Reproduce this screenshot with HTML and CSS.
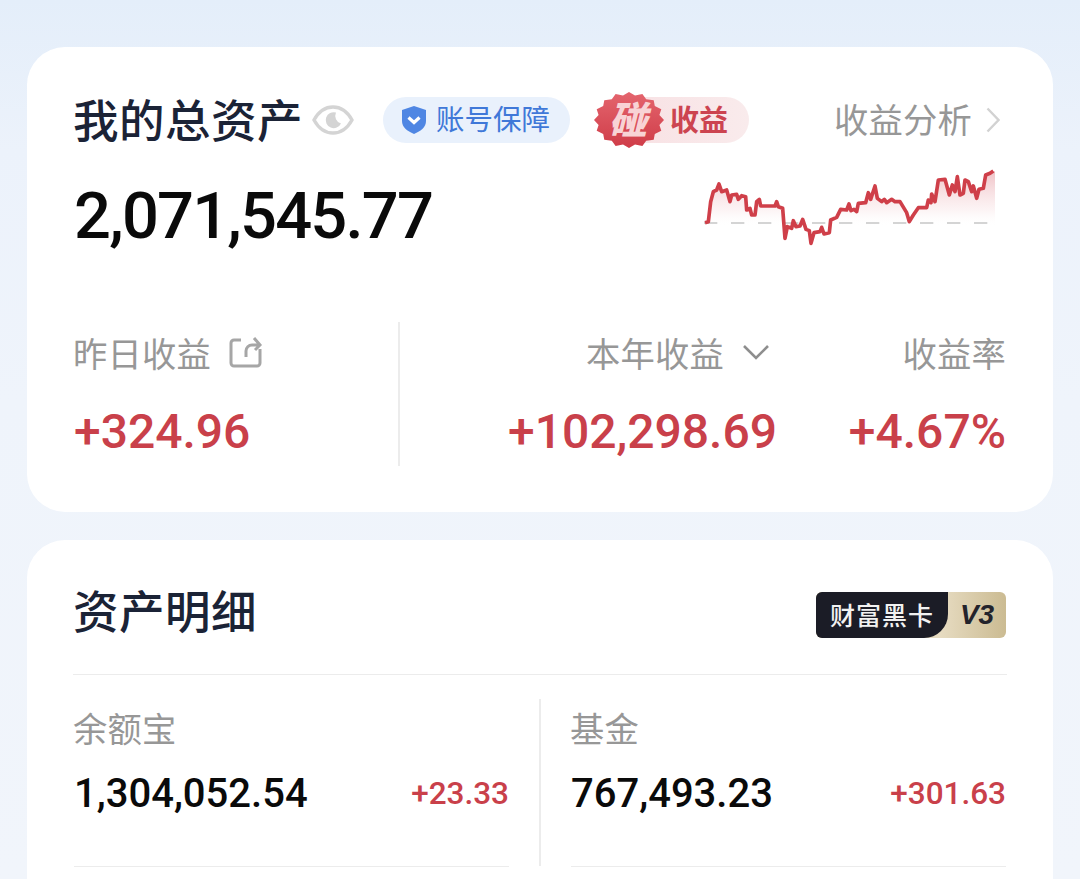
FILE: index.html
```html
<!DOCTYPE html>
<html lang="zh">
<head>
<meta charset="utf-8">
<title>我的总资产</title>
<link rel="stylesheet" href="styles.css">
</head>
<body>
<main class="page">
  <section class="card summary">
    <div class="head">
      <h1 class="title">我的总资产</h1>
      <svg class="eye" viewBox="0 0 42 32"><path d="M2 16C7 7 13 3 21 3s14 4 19 13c-5 9-11 13-19 13S7 25 2 16z" fill="none" stroke="#d4d4d4" stroke-width="3.400"/><path d="M24 8.500a8 8 0 1 0 5 11 8 8 0 0 1-5-11z" fill="#d4d4d4"/></svg>
      <div class="guard">
        <svg class="shield" viewBox="0 0 26 30"><path d="M13 1l12 4v11c0 6-5 10-12 13C6 26 1 22 1 16V5z" fill="#4f86e3"/><path d="M7.500 12.500l5.500 5 5.500-5" fill="none" stroke="#fff" stroke-width="3.200"/></svg>
        <span class="guard-text">账号保障</span>
      </div>
      <div class="promo">
        <div class="burst">
          <svg class="burst-bg" viewBox="0 0 72 56"><defs><linearGradient id="bg" x1="0" y1="0" x2="0" y2="1"><stop offset="0" stop-color="#e4656e"/><stop offset="1" stop-color="#cf3c48"/></linearGradient></defs><polygon fill="url(#bg)" points="71,28 66.400,32.900 68.300,38.700 61.800,41.900 60.700,47.800 53.200,48.800 49.400,53.900 42,52.500 36,56 30,52.500 22.600,53.900 18.800,48.800 11.300,47.800 10.200,41.900 3.700,38.700 5.600,32.900 1,28 5.600,23.100 3.700,17.300 10.200,14.100 11.300,8.200 18.800,7.200 22.600,2.100 30,3.500 36,0 42,3.500 49.400,2.100 53.200,7.200 60.700,8.200 61.800,14.100 68.300,17.300 66.400,23.100"/></svg>
          <span class="burst-text">碰</span>
        </div>
        <span class="promo-text">收益</span>
      </div>
      <div class="link">
        <span class="link-text">收益分析</span>
        <svg class="link-arrow" viewBox="0 0 14 26"><path d="M1.500 1.500L12.500 13 1.500 24.500" fill="none" stroke="#d2d2d2" stroke-width="2.400"/></svg>
      </div>
    </div>
    <div class="total-row">
      <div class="total">2,071,545.77</div>
      <svg class="spark" viewBox="0 0 900 270">
        <defs><linearGradient id="area" x1="0" y1="0" x2="0" y2="1"><stop offset="0" stop-color="#e38f97" stop-opacity=".55"/><stop offset=".7" stop-color="#f7dfe1" stop-opacity=".35"/><stop offset="1" stop-color="#fff" stop-opacity="0"/></linearGradient></defs>
        <path fill="url(#area)" d="M15 200L15 188 25 185 32 125 40 95 50 90 57 72 65 95 80 90 90 125 95 105 110 103 115 118 125 107 137 110 140 150 150 145 155 165 165 165 170 125 178 118 182 138 225 138 230 125 235 140 248 145 253 200 392 200 392 180 410 172 422 148 440 150 447 132 453 152 462 148 470 155 475 130 497 128 505 98 512 118 525 78 532 115 545 125 553 118 560 128 575 118 585 125 600 125 620 158 628 185 640 165 655 143 680 143 685 120 693 128 695 102 705 125 715 60 735 58 748 105 757 75 765 95 772 50 780 105 790 100 795 60 805 65 815 95 820 78 830 115 837 88 850 85 857 45 870 40 885 33 885 200z"/>
        <path d="M12 189H885" fill="none" stroke="#d4d4d4" stroke-width="6" stroke-dasharray="40 41"/>
        <path fill="none" stroke="#cf3f49" stroke-width="11" stroke-linejoin="round" d="M15 188L25 185 32 125 40 95 50 90 57 72 65 95 80 90 90 125 95 105 110 103 115 118 125 107 137 110 140 150 150 145 155 165 165 165 170 125 178 118 182 138 225 138 230 125 235 140 248 145 255 235 262 200 275 205 280 182 288 200 300 198 308 178 318 208 328 212 333 250 342 218 360 215 365 202 372 222 388 218 392 180 410 172 422 148 440 150 447 132 453 152 462 148 470 155 475 130 497 128 505 98 512 118 525 78 532 115 545 125 553 118 560 128 575 118 585 125 600 125 620 158 628 185 640 165 655 143 680 143 685 120 693 128 695 102 705 125 715 60 735 58 748 105 757 75 765 95 772 50 780 105 790 100 795 60 805 65 815 95 820 78 830 115 837 88 850 85 857 45 870 40 880 33"/>
      </svg>
    </div>
    <div class="stats">
      <div class="stat stat-day">
        <div class="label">昨日收益
          <svg class="share" viewBox="0 0 34 32"><path d="M12 4H5a3 3 0 0 0-3 3v20a3 3 0 0 0 3 3h23a3 3 0 0 0 3-3V13M17 21v-6a6 6 0 0 1 6-6h7M25 2l6 7-5 5" fill="none" stroke="#a6a6a6" stroke-width="3"/></svg>
        </div>
        <div class="gain">+324.96</div>
      </div>
      <div class="stat stat-year">
        <div class="label">本年收益
          <svg class="chev" viewBox="0 0 28 16"><path d="M2 2l12 12L26 2" fill="none" stroke="#8e8e8e" stroke-width="2.600"/></svg>
        </div>
        <div class="gain">+102,298.69</div>
      </div>
      <div class="stat stat-rate">
        <div class="label">收益率</div>
        <div class="gain">+4.67%</div>
      </div>
    </div>
  </section>
  <section class="card detail">
    <div class="detail-head">
      <h2 class="title">资产明细</h2>
      <div class="vip">
        <span class="vip-name">财富黑卡</span>
        <span class="vip-level">V3</span>
      </div>
    </div>
    <div class="grid">
      <div class="cell">
        <div class="label">余额宝</div>
        <div class="cell-row"><span class="cell-value">1,304,052.54</span><span class="cell-gain">+23.33</span></div>
      </div>
      <div class="cell cell-right">
        <div class="label">基金</div>
        <div class="cell-row"><span class="cell-value">767,493.23</span><span class="cell-gain">+301.63</span></div>
      </div>
    </div>
  </section>
</main>
</body>
</html>
```
FILE: styles.css
```css
* { box-sizing: border-box; }
html, body { margin: 0; padding: 0; height: 879px; overflow: hidden; }
body {
  background: linear-gradient(180deg, #e4eefa 0, #ecf2fb 150px, #eff4fb 400px, #f1f5fb 100%);
  font-family: "Noto Sans CJK SC", "Noto Sans", sans-serif;
}
.page { display: flex; flex-direction: column; gap: 28px; padding: 47px 27px 0; height: 879px; overflow: hidden; }
.card { background: #fff; border-radius: 38px; flex: none; }
.summary { height: 465px; padding: 46px 47px 0; }
.title { margin: 0 0 0 -1px; font-size: 45.500px; font-weight: 500; line-height: 54px; letter-spacing: .5px; color: #1b2336; }
.head { display: flex; align-items: center; height: 54px; }
.head .title { line-height: 50px; padding-bottom: 4px; }
.eye { width: 42px; height: 32px; margin-left: 9px; flex: none; }
.guard {
  display: flex; align-items: center; gap: 9px; width: 187px; height: 46px; margin-left: 29px; padding-left: 18px;
  background: #e9f1fc; border-radius: 23px; color: #3f78d8; font-size: 28.500px;
}
.guard-text { line-height: 36px; padding-bottom: 4px; }
.shield { width: 26px; height: 30px; flex: none; }
.promo { position: relative; width: 150px; height: 46px; margin-left: 29px; background: linear-gradient(90deg, #f8dfe2, #f9ebec); border-radius: 23px; padding-left: 71px; line-height: 42px; }
.promo-text { color: #cc4450; font-size: 29px; font-weight: 700; }
.burst { position: absolute; left: -6px; top: -5px; width: 72px; height: 56px; }
.burst-bg { display: block; width: 72px; height: 56px; }
.burst-text { position: absolute; left: 16px; top: 3px; font-size: 38px; line-height: 46px; font-weight: 900; font-style: italic; color: #f8d3d5; }
.link { display: flex; align-items: center; gap: 14px; margin-left: auto; margin-right: 6px; color: #979797; font-size: 34.300px; letter-spacing: .2px; }
.link-text { line-height: 46px; padding-bottom: 4px; }
.link-arrow { width: 14px; height: 26px; flex: none; }
.total-row { position: relative; display: flex; height: 150px; padding-top: 31px; margin-bottom: 25px; }
.total { font-family: Roboto, "Liberation Sans", sans-serif; font-size: 65px; font-weight: 500; line-height: 76px; letter-spacing: -1.800px; color: #0a0a0a; }
.spark { position: absolute; left: 626px; top: 13px; width: 300px; height: 90px; }
.stats { display: flex; height: 144px; }
.stat { display: flex; flex-direction: column; }
.stat-day { width: 326px; height: 144px; border-right: 2px solid #ececec; }
.stat-year { width: 377px; align-items: flex-end; }
.stat-rate { flex: 1; align-items: flex-end; }
.label { display: flex; align-items: center; height: 60px; margin-left: -1px; font-size: 34.300px; line-height: 60px; letter-spacing: .2px; color: #979797; }
.share { width: 34px; height: 32px; margin-left: 18px; flex: none; }
.chev { width: 28px; height: 16px; margin-left: 18px; margin-right: 7px; flex: none; }
.gain { margin-top: 20px; font-family: Roboto, "Liberation Sans", sans-serif; font-size: 48px; font-weight: 500; line-height: 60px; color: #c9404a; }
.detail { height: 400px; padding: 0 47px; }
.detail-head { display: flex; align-items: flex-start; justify-content: space-between; height: 135px; padding: 42px 1px 0; margin: 0 -1px; border-bottom: 1px solid #ececec; }
.vip { display: flex; width: 190px; height: 46px; margin-top: 10px; border-radius: 6px; overflow: hidden; background: linear-gradient(90deg, #c0ad82, #e7dcc2 65%, #cbbb92); }
.vip-name { width: 132px; background: #1b1c26; border-radius: 0 0 24px 0; color: #f2f2f2; font-size: 25px; font-weight: 500; line-height: 44px; text-align: center; letter-spacing: 1px; }
.vip-level { flex: 1; text-align: center; font-family: "Liberation Sans", sans-serif; font-size: 28px; font-weight: 700; font-style: italic; line-height: 46px; color: #23232b; }
.grid { display: grid; grid-template-columns: 465px 1fr; margin-top: 24px; }
.cell { height: 167px; padding-right: 30px; }
.cell-right { padding-right: 0; padding-left: 30px; border-left: 2px solid #ececec; }
.cell .label { height: 56px; line-height: 56px; }
.cell-row { display: flex; align-items: center; justify-content: space-between; height: 108px; padding-bottom: 39px; border-bottom: 1px solid #ececec; margin-top: 4px; }
.cell-value { font-family: Roboto, "Liberation Sans", sans-serif; font-size: 40px; font-weight: 500; color: #0a0a0a; }
.cell-gain { font-family: Roboto, "Liberation Sans", sans-serif; font-size: 31.500px; font-weight: 500; color: #c9404a; }
```
